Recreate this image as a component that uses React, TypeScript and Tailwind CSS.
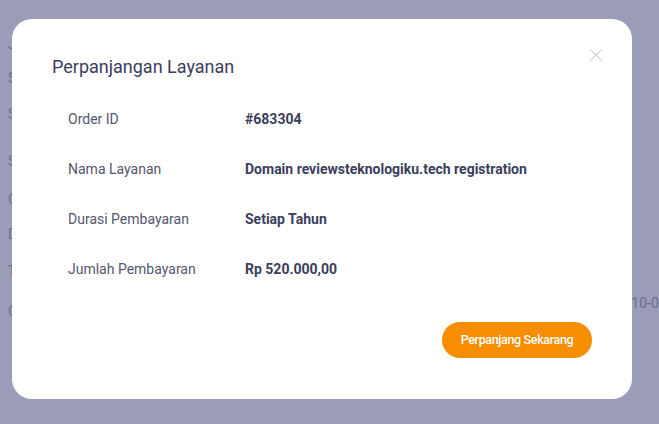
import React from "react";

const rows = [
  { label: "Order ID", value: "#683304" },
  { label: "Nama Layanan", value: "Domain reviewsteknologiku.tech registration" },
  { label: "Durasi Pembayaran", value: "Setiap Tahun" },
  { label: "Jumlah Pembayaran", value: "Rp 520.000,00" },
];

const bgLines = [
  { t: "Jenis", y: "mt-[34px]" },
  { t: "Status", y: "mt-[14px]" },
  { t: "Siklus", y: "mt-[16px]" },
  { t: "Status", y: "mt-[27px]" },
  { t: "Created", y: "mt-[18px]" },
  { t: "Durasi", y: "mt-[15px]" },
  { t: "Tanggal", y: "mt-[17px]" },
  { t: "Created", y: "mt-[20px]" },
];

export default function App() {
  return (
    <div
      className="relative w-[659px] h-[424px] overflow-hidden bg-[#9b9cb7]"
      style={{ fontFamily: "Roboto, 'Noto Sans', sans-serif" }}
    >
      {/* background page content */}
      <div className="flex flex-col pl-[8px] text-[14px] leading-[20px] text-[#6c6e8c]">
        {bgLines.map((l, i) => (
          <div key={i} className={l.y}>
            {l.t}
          </div>
        ))}
      </div>
      <div className="absolute left-[596px] top-[293px] whitespace-nowrap text-[14px] leading-[20px] text-[#6c6e8c]">
        2023-10-01
      </div>

      {/* modal */}
      <div className="absolute left-[12px] top-[19px] w-[620px] h-[380px] rounded-[20px] bg-white flex flex-col pt-[34px] px-[40px] pb-[41px]">
        <button className="absolute right-[30px] top-[30px] w-[12px] h-[12px] flex items-center justify-center">
          <svg width="12" height="12" viewBox="0 0 12 12" fill="none">
            <path d="M0.5 0.5L11.5 11.5M11.5 0.5L0.5 11.5" stroke="#d4d4d8" strokeWidth="1.2" />
          </svg>
        </button>
        <h2 className="text-[18px] leading-[28px] font-normal text-[#3b3e5c]">
          Perpanjangan Layanan
        </h2>
        <div className="flex flex-col mt-[13px] pl-[16px]">
          {rows.map((r) => (
            <div key={r.label} className="flex items-center h-[50px] text-[14px] leading-[20px]">
              <div className="w-[177px] text-[#55576c]">{r.label}</div>
              <div className="font-bold text-[#3b3e5c]">{r.value}</div>
            </div>
          ))}
        </div>
        <div className="flex justify-end mt-auto">
          <button className="h-[36px] w-[150px] rounded-full bg-[#f78d00] text-white text-[12.5px] font-medium tracking-[-0.35px]">
            Perpanjang Sekarang
          </button>
        </div>
      </div>
    </div>
  );
}
